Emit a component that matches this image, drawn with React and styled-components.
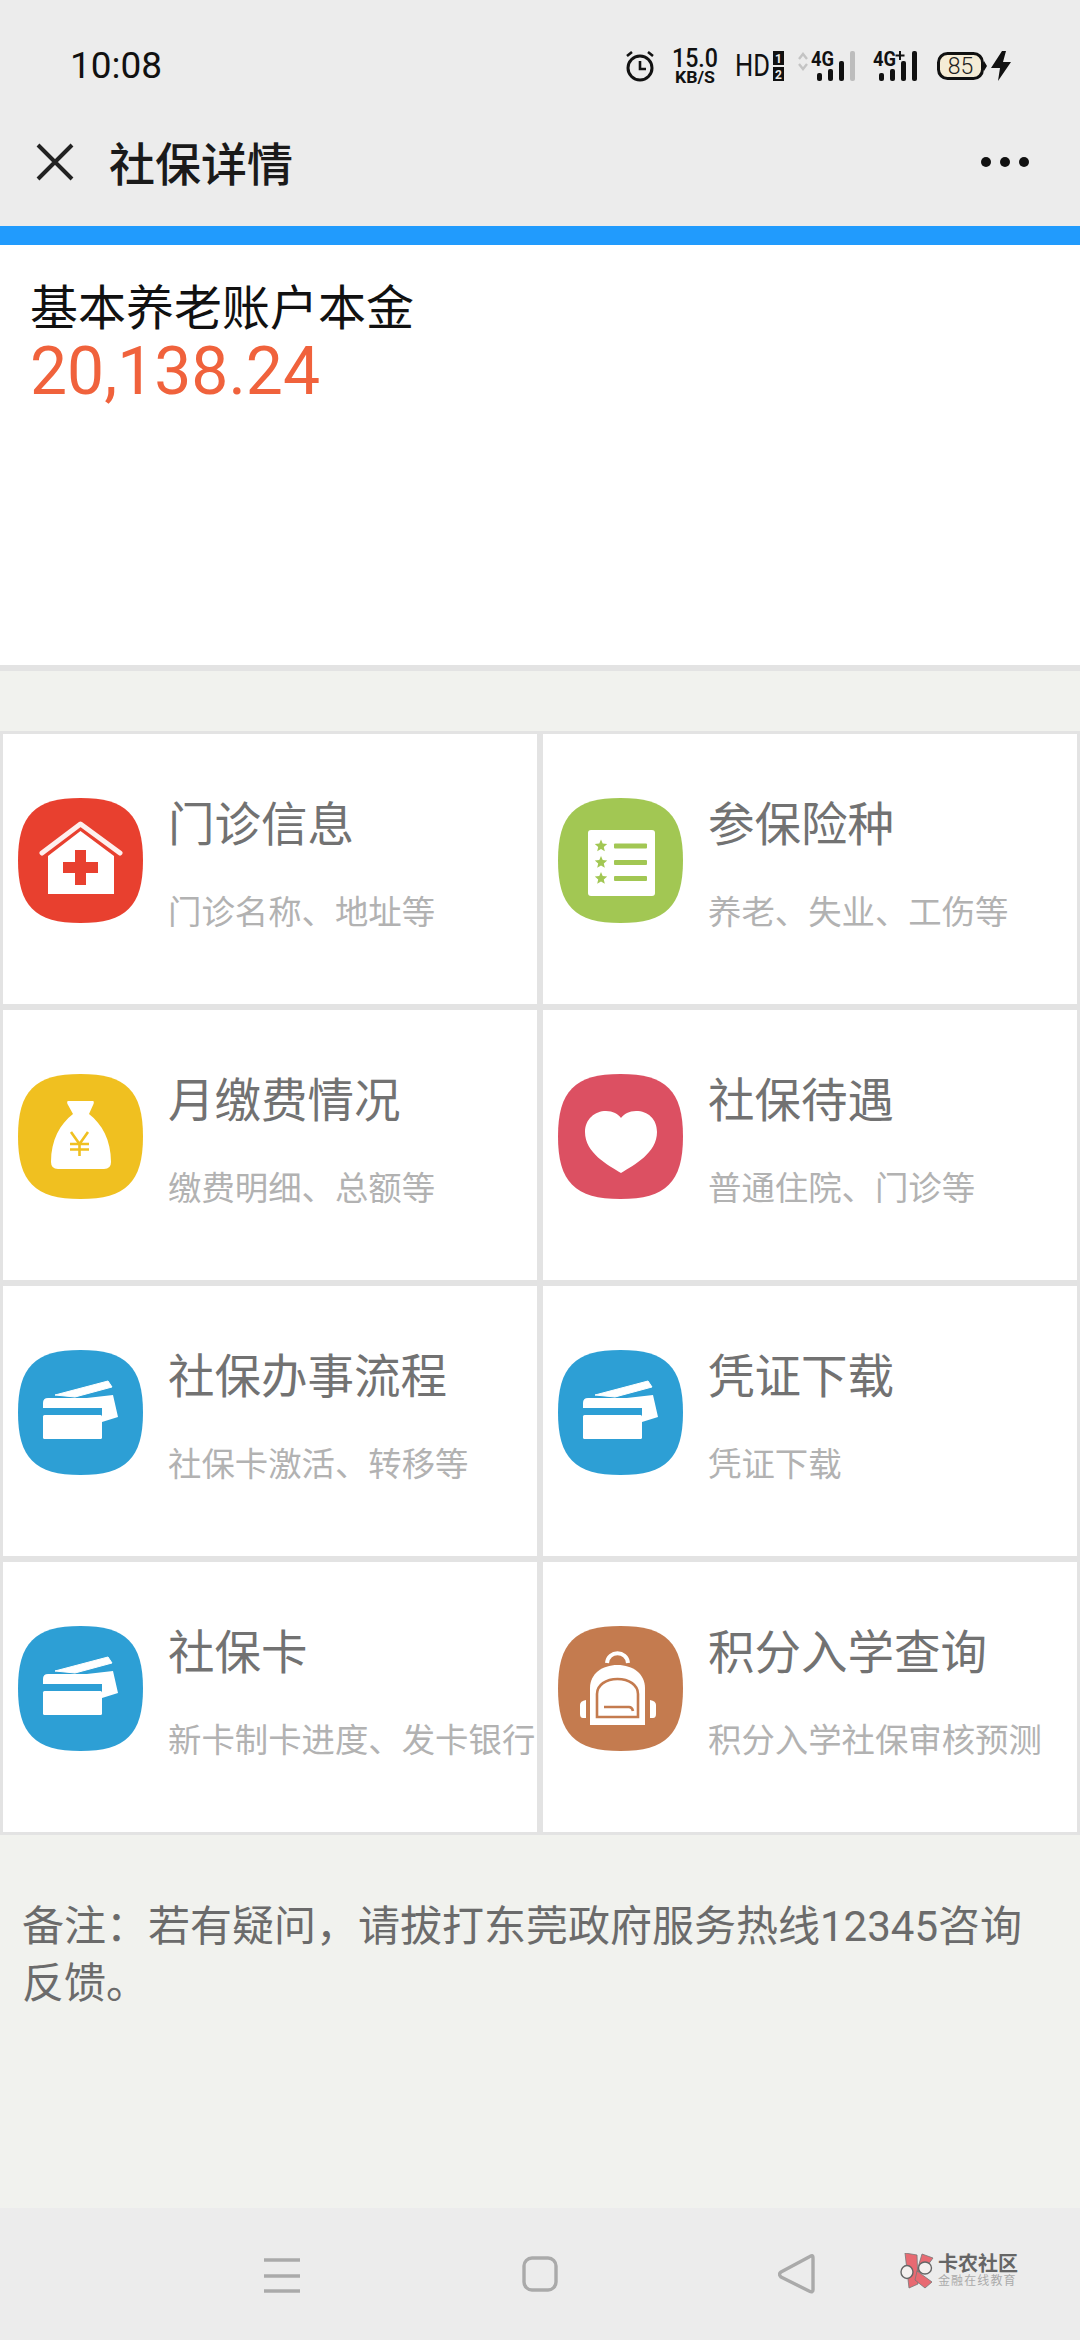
import React from "react";
import styled, { createGlobalStyle } from "styled-components";

const Global = createGlobalStyle`
  html, body { margin: 0; padding: 0; background: #f1f2ee; }
  * { box-sizing: border-box; }
`;

const FONT = `Roboto, "Noto Sans CJK SC", "Noto Sans", sans-serif`;

const Page = styled.div`
  width: 1080px;
  height: 2340px;
  overflow: hidden;
  display: flex;
  flex-direction: column;
  background: #f1f2ee;
  font-family: ${FONT};
`;
const Header = styled.header`
  height: 226px;
  background: #ececec;
  display: flex;
  flex-direction: column;
  flex: none;
`;
const StatusBar = styled.div`
  height: 116px;
  padding: 16px 69px 0 70px;
  display: flex;
  align-items: center;
  justify-content: space-between;
`;
const Time = styled.span`
  font-size: 37px;
  line-height: 100px;
  color: #111;
`;
const StatusIcons = styled.div`
  display: flex;
  align-items: center;
`;
const StatusIcon = styled.svg`
  display: block;
  flex: none;
  margin-left: ${(p) => p.$ml || 0}px;
  overflow: visible;
`;
const Toolbar = styled.div`
  height: 92px;
  padding: 0 51px 0 36px;
  display: flex;
  align-items: center;
`;
const CloseIcon = styled.svg`
  display: block;
  flex: none;
`;
const ToolbarTitle = styled.h1`
  margin: 6px 0 0 35px;
  font-size: 46px;
  line-height: 60px;
  font-weight: 500;
  color: #1a1a1a;
`;
const MoreIcon = styled.svg`
  display: block;
  margin-left: auto;
`;
const BlueBar = styled.div`
  height: 19px;
  flex: none;
  background: #219bfd;
`;
const Summary = styled.section`
  height: 426px;
  flex: none;
  background: #fff;
  border-bottom: 6px solid #e3e3e3;
  padding: 34px 30px 0;
`;
const SummaryLabel = styled.div`
  font-size: 48px;
  line-height: 60px;
  color: #111;
`;
const SummaryValue = styled.div`
  margin-top: -2px;
  font-size: 66px;
  line-height: 70px;
  color: #f0623c;
`;
const Grid = styled.div`
  margin-top: 60px;
  display: grid;
  grid-template-columns: 540px 540px;
  grid-auto-rows: 276px;
  flex: none;
`;
const Cell = styled.div`
  border: 3px solid #e3e3e3;
  background: #fff;
  padding: 64px 0 0 15px;
  display: flex;
  align-items: flex-start;
  overflow: hidden;
`;
const IconSvg = styled.svg`
  display: block;
  flex: none;
  width: 125px;
  height: 125px;
`;
const CellText = styled.div`
  margin: 3px 0 0 25px;
  white-space: nowrap;
`;
const CellTitle = styled.div`
  font-size: 46.5px;
  line-height: 48px;
  color: #727272;
`;
const CellSub = styled.div`
  margin-top: 44px;
  font-size: 33.4px;
  line-height: 40px;
  color: #b2b2b2;
`;
const Note = styled.p`
  margin: 0;
  flex: 1;
  padding: 63px 30px 0 22px;
  font-size: 42px;
  line-height: 57px;
  color: #6b6b6b;
`;
const Nav = styled.nav`
  height: 132px;
  flex: none;
  background: #ececec;
  padding: 0 0 0 264px;
  display: flex;
  align-items: flex-start;
`;
const NavIcon = styled.svg`
  display: block;
  flex: none;
  margin-top: ${(p) => p.$mt}px;
  margin-left: ${(p) => p.$ml || 0}px;
`;
const Logo = styled.div`
  margin: 45px 0 0 85px;
  display: flex;
  align-items: flex-start;
`;
const LogoMark = styled.svg`
  display: block;
  flex: none;
`;
const LogoText = styled.div`
  margin-left: 3px;
`;
const LogoName = styled.div`
  font-size: 20px;
  line-height: 22px;
  font-weight: 700;
  color: #666;
  white-space: nowrap;
`;
const LogoSub = styled.div`
  font-size: 12px;
  line-height: 13px;
  color: #aaa;
  letter-spacing: 1.1px;
  white-space: nowrap;
`;

const SQ =
  "M62.5 0C108 0 125 17 125 62.5C125 108 108 125 62.5 125C17 125 0 108 0 62.5C0 17 17 0 62.5 0Z";

const Squircle = ({ color, children }) => (
  <IconSvg viewBox="0 0 125 125">
    <path d={SQ} fill={color} />
    {children}
  </IconSvg>
);

const star = (cx, cy, r) => {
  const pts = [];
  for (let i = 0; i < 10; i++) {
    const rad = i % 2 ? r * 0.45 : r;
    const a = -Math.PI / 2 + (i * Math.PI) / 5;
    pts.push(`${(cx + rad * Math.cos(a)).toFixed(1)},${(cy + rad * Math.sin(a)).toFixed(1)}`);
  }
  return pts.join(" ");
};

const House = () => (
  <Squircle color="#e8402f">
    <path d="M24 55L62.5 26L102 55" fill="none" stroke="#fff" strokeWidth="5" strokeLinecap="round" strokeLinejoin="round" opacity="0.92" />
    <path d="M30 58L62.5 33L96 58V96H30Z" fill="#fff" />
    <path d="M57 52H68V64H80V75H68V87H57V75H45V64H57Z" fill="#e8402f" />
  </Squircle>
);
const ListCard = () => (
  <Squircle color="#a2c753">
    <rect x="30" y="32" width="67" height="66" rx="3" fill="#fff" />
    {[48, 64.5, 80.5].map((y) => (
      <g key={y}>
        <polygon points={star(43, y, 6.5)} fill="#a2c753" />
        <rect x="56" y={y - 2.5} width="33" height="5" rx="1" fill="#a2c753" />
      </g>
    ))}
  </Squircle>
);
const MoneyBag = () => (
  <Squircle color="#f0c020">
    <path d="M50 27H75C76 27 76 29 75.5 30L71 40C84 50 93 66 93 88Q93 95 86 95H40Q33 95 33 88C33 66 42 50 55 40L49.5 30C49 29 49 27 50 27Z" fill="#fff" />
    <path d="M53 58L61.5 70L70 58M61.5 70V82M52 70H71M52 75.5H71" fill="none" stroke="#f0c020" strokeWidth="2.6" />
  </Squircle>
);
const Heart = () => (
  <Squircle color="#dc5062">
    <path d="M63 99C50 91 27 79 27 58C27 45 37 37 48 37C55 37 60 40 63 44C66 40 71 37 78 37C90 37 99 45 99 58C99 79 76 91 63 99Z" fill="#fff" />
  </Squircle>
);
const Cards = () => (
  <Squircle color="#2d9fd5">
    <path d="M37 45L90 31L94 37L57 47Z" fill="#fff" strokeLinejoin="round" stroke="#fff" strokeWidth="1" />
    <path d="M60 49L95 45L100 67L84 72V49Z" fill="#fff" />
    <path d="M30 48H85V58H25V53Q25 48 30 48Z" fill="#fff" />
    <rect x="25" y="65" width="59" height="24" rx="1.5" fill="#fff" />
  </Squircle>
);
const Backpack = () => (
  <Squircle color="#c47b4f">
    <path d="M49 37C50 24 69 24 70 37" fill="none" stroke="#fff" strokeWidth="4" />
    <path d="M32 99V62C32 48 44 39 59.5 39C75 39 87 48 87 62V99Z" fill="#fff" />
    <path d="M39 91V68C39 59 48 53 59.5 53C71 53 80 59 80 68V91Z" fill="none" stroke="#c47b4f" strokeWidth="2.6" />
    <path d="M46 81H71Q74 81 75 85" fill="none" stroke="#c47b4f" strokeWidth="2.6" />
    <path d="M28 74V92H25Q22 92 22 88V79Q22 75 28 74Z" fill="#fff" />
    <path d="M92 74V92H95Q98 92 98 88V79Q98 75 92 74Z" fill="#fff" />
  </Squircle>
);

const items = [
  ["门诊信息", "门诊名称、地址等", House],
  ["参保险种", "养老、失业、工伤等", ListCard],
  ["月缴费情况", "缴费明细、总额等", MoneyBag],
  ["社保待遇", "普通住院、门诊等", Heart],
  ["社保办事流程", "社保卡激活、转移等", Cards],
  ["凭证下载", "凭证下载", Cards],
  ["社保卡", "新卡制卡进度、发卡银行", Cards],
  ["积分入学查询", "积分入学社保审核预测", Backpack],
];

const Bars = ({ x, last }) => (
  <>
    <rect x={x} y="22" width="5" height="8" rx="2" fill="#111" />
    <rect x={x + 11} y="18" width="5" height="12" rx="2" fill="#111" />
    <rect x={x + 22} y="10" width="5" height="20" rx="2" fill="#111" />
    <rect x={x + 33} y="0" width="5" height="30" rx="2" fill={last} />
  </>
);

export default function App() {
  return (
    <Page>
      <Global />
      <Header>
        <StatusBar>
          <Time>10:08</Time>
          <StatusIcons>
            <StatusIcon width="28" height="30" viewBox="0 0 28 30">
              <circle cx="14" cy="17" r="12" fill="none" stroke="#111" strokeWidth="3" />
              <path d="M14 10V18H20" fill="none" stroke="#111" strokeWidth="2.6" />
              <path d="M1 5L6 1M27 5L22 1" stroke="#111" strokeWidth="2.6" />
            </StatusIcon>
            <StatusIcon $ml="18" width="46" height="36" viewBox="0 0 46 36">
              <text x="0" y="19" fontFamily="Roboto" fontWeight="500" fontSize="26" fill="#111" textLength="46" lengthAdjust="spacingAndGlyphs">15.0</text>
              <text x="3" y="35" fontFamily="Roboto" fontWeight="700" fontSize="16" fill="#111" textLength="40" lengthAdjust="spacingAndGlyphs">KB/S</text>
            </StatusIcon>
            <StatusIcon $ml="17" width="49" height="30" viewBox="0 0 49 30">
              <text x="0" y="25" fontFamily="Roboto" fontSize="31" fill="#111" textLength="35" lengthAdjust="spacingAndGlyphs">HD</text>
              <rect x="38" y="0" width="11" height="14" fill="#111" />
              <rect x="38" y="16" width="11" height="14" fill="#111" />
              <text x="43.5" y="12" fontFamily="Roboto" fontWeight="700" fontSize="12" fill="#ececec" textAnchor="middle">1</text>
              <text x="43.5" y="28" fontFamily="Roboto" fontWeight="700" fontSize="12" fill="#ececec" textAnchor="middle">2</text>
            </StatusIcon>
            <StatusIcon $ml="14" width="57" height="30" viewBox="0 0 57 30">
              <path d="M1 8L5 3L9 8M1 13L5 18L9 13" fill="none" stroke="#c4c4c4" strokeWidth="2.4" />
              <text x="13" y="15" fontFamily="Roboto" fontWeight="700" fontSize="20" fill="#111" textLength="23" lengthAdjust="spacingAndGlyphs">4G</text>
              <Bars x={19} last="#bdbdbd" />
            </StatusIcon>
            <StatusIcon $ml="18" width="44" height="30" viewBox="0 0 44 30">
              <text x="0" y="15" fontFamily="Roboto" fontWeight="700" fontSize="20" fill="#111" textLength="23" lengthAdjust="spacingAndGlyphs">4G</text>
              <path d="M27 0V9M22.5 4.5H31.5" stroke="#111" strokeWidth="2" />
              <Bars x={6} last="#111" />
            </StatusIcon>
            <StatusIcon $ml="20" width="50" height="28" viewBox="0 0 50 28">
              <rect x="1.5" y="1.5" width="44" height="25" rx="9" fill="#f5ecd6" stroke="#111" strokeWidth="3" />
              <path d="M47 9L50 14L47 19Z" fill="#111" />
              <text x="23.5" y="22" fontFamily="Roboto" fontWeight="300" fontSize="23" fill="#222" textAnchor="middle">85</text>
            </StatusIcon>
            <StatusIcon $ml="4" width="20" height="30" viewBox="0 0 20 30">
              <path d="M11 0H15L12 11H20L7 30L9 17H0Z" fill="#111" />
            </StatusIcon>
          </StatusIcons>
        </StatusBar>
        <Toolbar>
          <CloseIcon width="38" height="38" viewBox="0 0 38 38">
            <path d="M2 2L36 36M36 2L2 36" stroke="#222" strokeWidth="4" />
          </CloseIcon>
          <ToolbarTitle>社保详情</ToolbarTitle>
          <MoreIcon width="48" height="10" viewBox="0 0 48 10">
            <circle cx="5" cy="5" r="5" fill="#111" />
            <circle cx="24" cy="5" r="5" fill="#111" />
            <circle cx="43" cy="5" r="5" fill="#111" />
          </MoreIcon>
        </Toolbar>
      </Header>
      <BlueBar />
      <Summary>
        <SummaryLabel>基本养老账户本金</SummaryLabel>
        <SummaryValue>20,138.24</SummaryValue>
      </Summary>
      <Grid>
        {items.map(([title, sub, Icon]) => (
          <Cell key={title}>
            <Icon />
            <CellText>
              <CellTitle>{title}</CellTitle>
              <CellSub>{sub}</CellSub>
            </CellText>
          </Cell>
        ))}
      </Grid>
      <Note>备注：若有疑问，请拔打东莞政府服务热线12345咨询反馈。</Note>
      <Nav>
        <NavIcon $mt="50" width="36" height="35" viewBox="0 0 36 35">
          <path d="M0 2H36M0 18H36M0 33H36" stroke="#aaa" strokeWidth="3.4" />
        </NavIcon>
        <NavIcon $mt="48" $ml="222" width="36" height="36" viewBox="0 0 36 36">
          <rect x="2" y="2" width="32" height="32" rx="8" fill="none" stroke="#aaa" strokeWidth="3.4" />
        </NavIcon>
        <NavIcon $mt="46" $ml="220" width="37" height="40" viewBox="0 0 37 40">
          <path d="M35 4Q35 0 31 3L3 18Q0 20 3 23L31 37Q35 39 35 36Z" fill="none" stroke="#aaa" strokeWidth="3.4" strokeLinejoin="round" />
        </NavIcon>
        <Logo>
          <LogoMark width="35" height="36" viewBox="0 0 35 36">
            <path d="M5 0L17 2L18 31L9 35Z" fill="#e86a72" stroke="#777" strokeWidth="0.8" />
            <path d="M22 1L33 5L22 20L17 18Z" fill="#e86a72" stroke="#777" strokeWidth="0.8" />
            <path d="M17 18L32 29L25 35L15 27Z" fill="#e86a72" stroke="#777" strokeWidth="0.8" />
            <ellipse cx="7" cy="19" rx="6" ry="6.5" fill="#f4f0ee" stroke="#666" strokeWidth="1.4" />
            <ellipse cx="25" cy="15" rx="6.5" ry="6" fill="#f4f0ee" stroke="#666" strokeWidth="1.4" />
          </LogoMark>
          <LogoText>
            <LogoName>卡农社区</LogoName>
            <LogoSub>金融在线教育</LogoSub>
          </LogoText>
        </Logo>
      </Nav>
    </Page>
  );
}
